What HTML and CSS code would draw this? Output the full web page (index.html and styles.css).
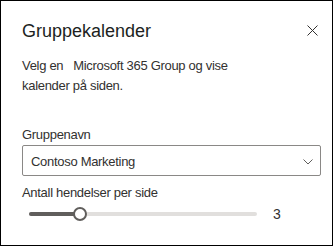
FILE: index.html
```html
<!DOCTYPE html>
<html lang="nb">
<head>
  <meta charset="UTF-8">
  <meta name="viewport" content="width=device-width, initial-scale=1">
  <title>Gruppekalender</title>
  <link rel="stylesheet" href="styles.css">
</head>
<body>
  <div class="panel">
    <!-- Topptekst med lukkeknapp -->
    <div class="panel-header">
      <h2 class="panel-title">Gruppekalender</h2>
      <button class="close-btn" aria-label="Lukk">
        <svg width="11" height="11" viewBox="0 0 11 11">
          <path d="M0.5 0.5 L10.5 10.5 M10.5 0.5 L0.5 10.5" stroke="#323130" stroke-width="1" fill="none"/>
        </svg>
      </button>
    </div>

    <p class="description">Velg en&nbsp;&nbsp; Microsoft 365 Group og vise kalender på siden.</p>

    <!-- Valg av gruppe -->
    <div class="field field-group">
      <label class="field-label">Gruppenavn</label>
      <div class="dropdown">
        <span class="dropdown-text">Contoso Marketing</span>
        <svg class="chevron" width="10" height="6" viewBox="0 0 10 6">
          <path d="M0.5 0.5 L5 5 L9.5 0.5" stroke="#605e5c" stroke-width="1" fill="none"/>
        </svg>
      </div>
    </div>

    <!-- Antall hendelser -->
    <div class="field field-count">
      <label class="field-label">Antall hendelser per side</label>
      <div class="slider-row">
        <div class="slider">
          <div class="slider-track">
            <div class="slider-fill" style="width: 22.2%"></div>
          </div>
          <div class="slider-thumb" style="left: 22.2%"></div>
        </div>
        <span class="slider-value">3</span>
      </div>
    </div>
  </div>
</body>
</html>
```

FILE: styles.css
```css
* {
  box-sizing: border-box;
  margin: 0;
  padding: 0;
}

body {
  background-color: #fff;
  color: #323130;
  font-family: 'Liberation Sans', Arial, sans-serif;
}

/* Panelet */
.panel {
  width: 333px;
  height: 246px;
  border: 1px solid #000;
  padding: 18px 11px 0 21px;
}

.panel-header {
  display: flex;
  justify-content: space-between;
  align-items: flex-start;
}

.panel-title {
  font-size: 18px;
  font-weight: normal;
  line-height: 24px;
  color: #201f1e;
}

.close-btn {
  background: none;
  border: none;
  margin: 6px 3px 0 0;
  width: 11px;
  height: 11px;
  display: flex;
  cursor: pointer;
}

.description {
  margin-top: 13px;
  max-width: 230px;
  font-size: 13px;
  line-height: 20px;
  letter-spacing: -0.3px;
}

/* Felter */
.field-label {
  display: block;
  font-size: 13px;
  line-height: 18px;
  letter-spacing: -0.3px;
}

.field-group {
  margin-top: 30px;
}

.field-count {
  margin-top: 8px;
}

.dropdown {
  margin-top: 1px;
  height: 31px;
  border: 1px solid #8a8886;
  border-radius: 2px;
  display: flex;
  align-items: center;
  justify-content: space-between;
  padding: 2px 7px 0 8px;
}

.dropdown-text {
  font-size: 13px;
  letter-spacing: -0.3px;
}

/* Glidebryter */
.slider-row {
  display: flex;
  align-items: center;
  height: 24px;
}

.slider {
  position: relative;
  margin-left: 7px;
  width: 228px;
  height: 14px;
  display: flex;
  align-items: center;
}

.slider-track {
  width: 100%;
  height: 4px;
  border-radius: 2px;
  background-color: #e1dfdd;
  overflow: hidden;
}

.slider-fill {
  height: 100%;
  background-color: #605e5c;
}

.slider-thumb {
  position: absolute;
  top: 0;
  width: 14px;
  height: 14px;
  margin-left: -7px;
  border: 2px solid #605e5c;
  border-radius: 50%;
  background-color: #fff;
}

.slider-value {
  margin-left: 16px;
  font-size: 14px;
}
```
